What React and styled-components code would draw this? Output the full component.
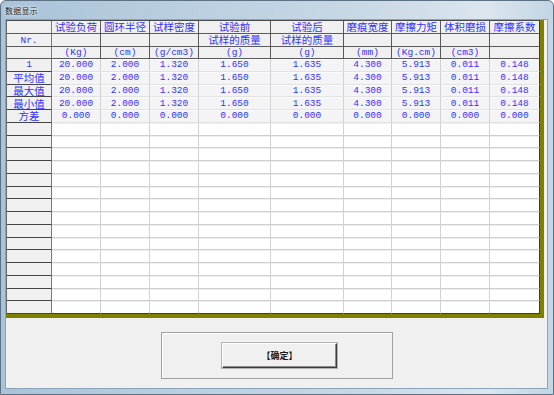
import React from 'react';
import styled, { createGlobalStyle } from 'styled-components';

const GlobalStyle = createGlobalStyle`
    html, body {
        margin: 0;
        padding: 0;
        background: #ffffff;
    }
`;

const COLUMNS = [
    { title: '试验负荷', sub: '', unit: '(Kg)', width: 49 },
    { title: '圆环半径', sub: '', unit: '(cm)', width: 49 },
    { title: '试样密度', sub: '', unit: '(g/cm3)', width: 49 },
    { title: '试验前', sub: '试样的质量', unit: '(g)', width: 72 },
    { title: '试验后', sub: '试样的质量', unit: '(g)', width: 73 },
    { title: '磨痕宽度', sub: '', unit: '(mm)', width: 48 },
    { title: '摩擦力矩', sub: '', unit: '(Kg.cm)', width: 49 },
    { title: '体积磨损', sub: '', unit: '(cm3)', width: 49 },
    { title: '摩擦系数', sub: '', unit: '', width: 50 },
];

const SAMPLE = ['20.000', '2.000', '1.320', '1.650', '1.635', '4.300', '5.913', '0.011', '0.148'];
const ZEROS = SAMPLE.map(() => '0.000');

const DATA = [
    { label: '1', values: SAMPLE },
    { label: '平均值', values: SAMPLE },
    { label: '最大值', values: SAMPLE },
    { label: '最小值', values: SAMPLE },
    { label: '方差', values: ZEROS },
];

const TOTAL_ROWS = 20;

const hasHan = (text) => /[\u4e00-\u9fff]/.test(text);

const Window = styled.div`
    box-sizing: border-box;
    width: 554px;
    height: 395px;
    display: flex;
    flex-direction: column;
    border: 1px solid #5d7185;
    border-radius: 6px 6px 0 0;
    background: linear-gradient(90deg, #a9c3d8 0%, #b9cee0 30%, #c8d8e5 65%, #dbe6ee 88%, #c2d5e4 100%);
    overflow: hidden;
`;

const TitleBar = styled.div`
    height: 19px;
    display: flex;
    align-items: center;
    padding-left: 4px;
    font-family: "Noto Sans CJK SC", sans-serif;
    font-size: 8px;
    color: #1c1c1c;
    text-shadow: 0 0 4px #eef4f8, 0 0 2px #f4f8fb;
    letter-spacing: 0.2px;
`;

const Client = styled.div`
    flex: 1;
    display: flex;
    flex-direction: column;
    margin: 0 6px 6px 5px;
    background: #f0f0f0;
    box-shadow: 0 0 0 1px #8aa4ba;
`;

const GridFrame = styled.div`
    align-self: flex-start;
    border-right: 4px solid #7f7f00;
    border-bottom: 4px solid #7f7f00;
`;

const Grid = styled.div`
    display: grid;
    grid-template-columns: 45px ${COLUMNS.map((c) => `${c.width}px`).join(' ')};
    grid-template-rows: 13px 13px 12px repeat(${TOTAL_ROWS}, 12.75px);
    border-top: 1px solid #4a4a4a;
    border-left: 1px solid #6a6a6a;
    background: #ffffff;
`;

const Cell = styled.div`
    box-sizing: border-box;
    display: flex;
    align-items: center;
    justify-content: center;
    white-space: nowrap;
    color: #3333ff;
    font-family: ${(p) => (p.$han ? '"Noto Sans CJK SC", sans-serif' : '"Liberation Mono", monospace')};
    font-size: ${(p) => (p.$han ? '10.5px' : '9.5px')};
    line-height: 10px;
`;

const HeadCell = styled(Cell)`
    background: #f0f0f0;
    border-right: 1px solid ${(p) => (p.$last ? '#3a3a3a' : '#5a5a5a')};
    border-bottom: 1px solid #5a5a5a;
`;

const RowLabel = styled(Cell)`
    background: #f0f0f0;
    border-right: 1px solid #7a7a7a;
    border-bottom: 1px solid ${(p) => (p.$head ? '#5a5a5a' : '#444444')};
    padding-top: 1px;
`;

const ValueCell = styled(Cell)`
    background: ${(p) => (p.$filled ? '#f4f4f6' : '#ffffff')};
    border-right: 1px solid ${(p) => (p.$last ? '#3a3a3a' : '#d2d2d2')};
    border-bottom: 1px solid ${(p) => (p.$bottom ? '#3a3a3a' : p.$filled ? '#e2e2e2' : '#cfcfcf')};
    box-shadow: inset 0 1px 0 ${(p) => (p.$filled ? '#fbfbfb' : '#efefef')};
    padding-top: 1px;
`;

const Footer = styled.div`
    flex: 1;
    display: flex;
    justify-content: center;
    padding-top: 14px;
`;

const GroupBox = styled.div`
    box-sizing: border-box;
    width: 232px;
    height: 47px;
    display: flex;
    align-items: center;
    justify-content: center;
    border: 1px solid #a0a0a0;
    box-shadow: inset 1px 1px 0 #ffffff;
`;

const Button = styled.button`
    box-sizing: border-box;
    width: 115px;
    height: 25px;
    margin-left: 6px;
    padding: 0;
    background: #f0f0f0;
    border: 1px solid;
    border-color: #ffffff #3c3c3c #3c3c3c #ffffff;
    box-shadow: inset -1px -1px 0 #8a8a8a, 0 0 0 1px #b4b4b4;
    font-family: "Noto Sans CJK SC", sans-serif;
    font-size: 9px;
    font-weight: 700;
    color: #1a1a1a;
    cursor: pointer;
`;

const App = () => {
    const lastCol = COLUMNS.length - 1;
    const bodyRows = Array.from({ length: TOTAL_ROWS }, (_, i) => DATA[i] || null);

    return (
        <>
            <GlobalStyle />
            <Window>
                <TitleBar>数据显示</TitleBar>
                <Client>
                    <GridFrame>
                        <Grid>
                            <RowLabel $head />
                            {COLUMNS.map((c, i) => (
                                <HeadCell key={`t${i}`} $han $last={i === lastCol}>{c.title}</HeadCell>
                            ))}

                            <RowLabel $head>Nr.</RowLabel>
                            {COLUMNS.map((c, i) => (
                                <HeadCell key={`s${i}`} $han $last={i === lastCol}>{c.sub}</HeadCell>
                            ))}

                            <RowLabel $head />
                            {COLUMNS.map((c, i) => (
                                <HeadCell key={`u${i}`} $last={i === lastCol}>{c.unit}</HeadCell>
                            ))}

                            {bodyRows.map((row, r) => (
                                <React.Fragment key={`r${r}`}>
                                    <RowLabel $han={row && hasHan(row.label)}>{row ? row.label : ''}</RowLabel>
                                    {COLUMNS.map((_, i) => (
                                        <ValueCell
                                            key={i}
                                            $filled={!!row}
                                            $last={i === lastCol}
                                            $bottom={r === TOTAL_ROWS - 1}
                                        >
                                            {row ? row.values[i] : ''}
                                        </ValueCell>
                                    ))}
                                </React.Fragment>
                            ))}
                        </Grid>
                    </GridFrame>
                    <Footer>
                        <GroupBox>
                            <Button>【确定】</Button>
                        </GroupBox>
                    </Footer>
                </Client>
            </Window>
        </>
    );
};

export default App;
